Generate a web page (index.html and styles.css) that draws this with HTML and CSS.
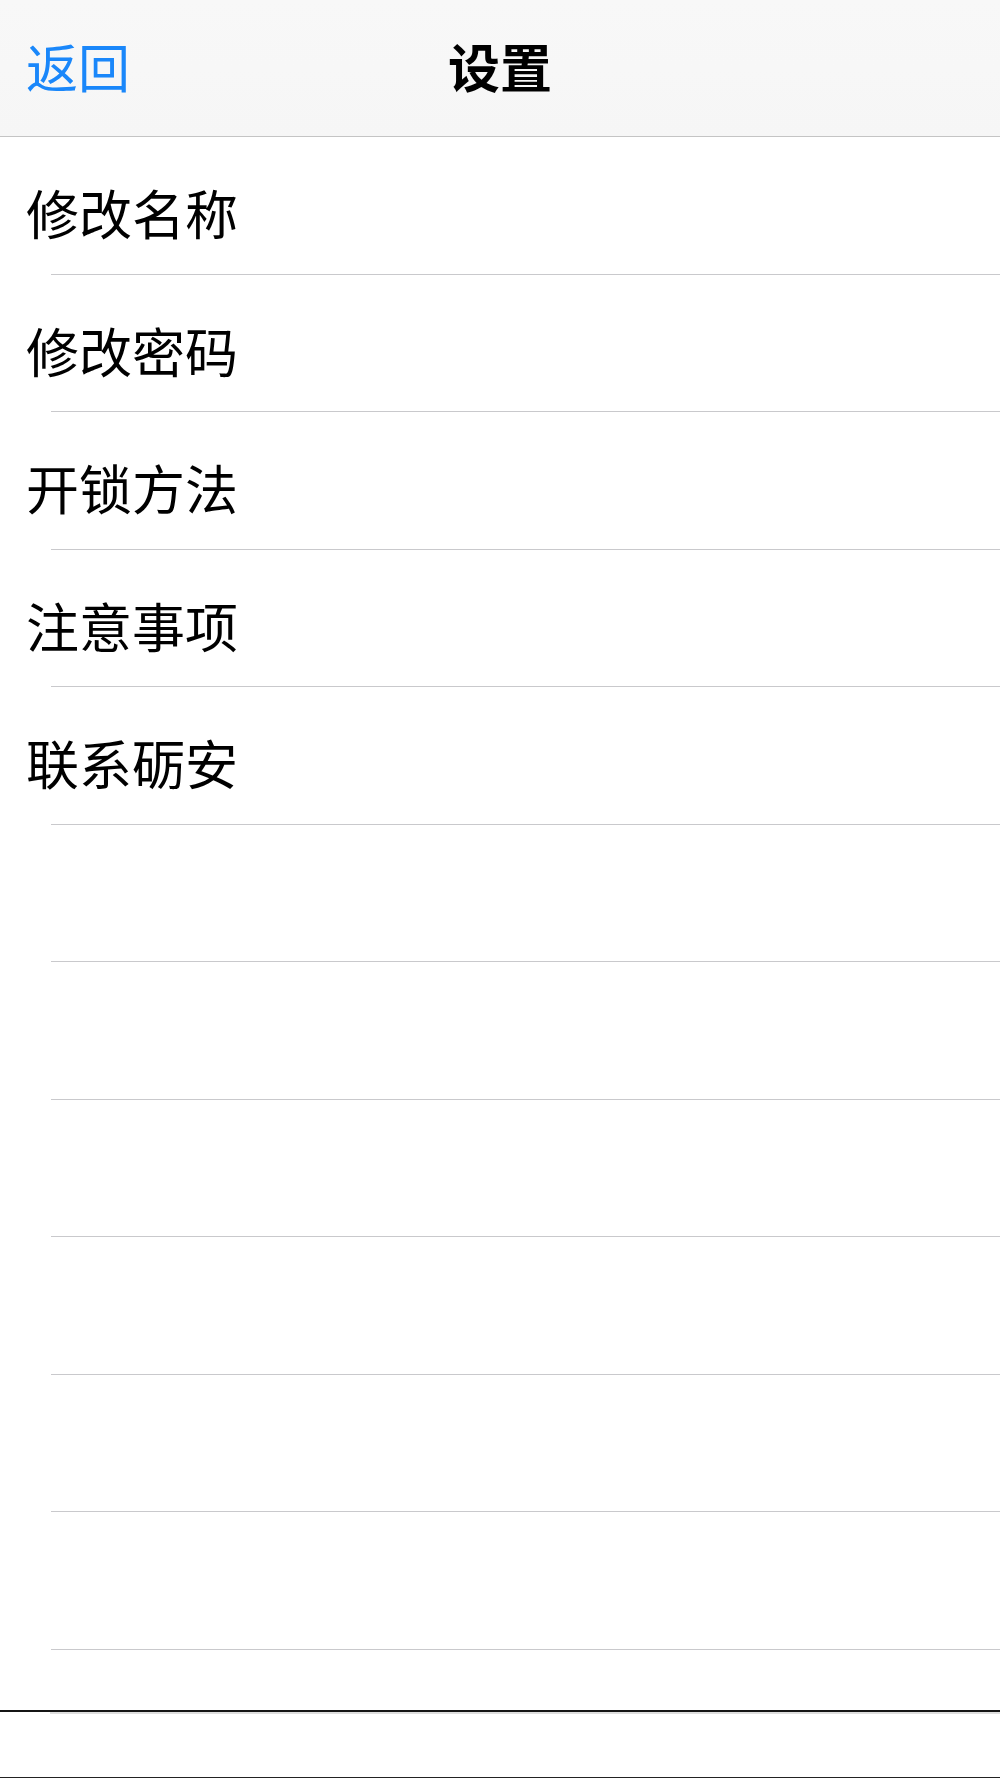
FILE: index.html
```html
<!DOCTYPE html>
<html lang="zh-CN">
<head>
    <meta charset="UTF-8">
    <meta name="viewport" content="width=device-width, initial-scale=1.0">
    <title>设置</title>
    <link rel="stylesheet" href="styles.css">
</head>
<body>
    <div class="page">
        <div class="navbar">
            <a href="#" class="backbtn">返回</a>
            <div class="navtitle">设置</div>
            <div class="navright"></div>
        </div>

        <ul class="settinglist">
            <li class="cell"><span class="celltext">修改名称</span></li>
            <li class="cell"><span class="celltext">修改密码</span></li>
            <li class="cell"><span class="celltext">开锁方法</span></li>
            <li class="cell"><span class="celltext">注意事项</span></li>
            <li class="cell"><span class="celltext">联系砺安</span></li>
            <li class="cell"></li>
            <li class="cell"></li>
            <li class="cell"></li>
            <li class="cell"></li>
            <li class="cell"></li>
            <li class="cell"></li>
        </ul>

        <div class="bottombar">
            <div class="bottomline"></div>
        </div>
    </div>
</body>
</html>
```

FILE: styles.css
```css
body {
    margin: 0;
    background-color: #fff;
    font-family: "Noto Sans CJK SC", "Noto Sans", sans-serif;
}

.page {
    height: 1778px;
    display: flex;
    flex-direction: column;
}

.navbar {
    box-sizing: border-box;
    height: 137px;
    flex-shrink: 0;
    display: flex;
    align-items: center;
    justify-content: space-between;
    padding: 0 26px 6px 26px;
    background: linear-gradient(#f8f8f8, #f6f6f6);
    border-bottom: 1px solid #c4c4c4;
}

.backbtn {
    width: 110px;
    font-size: 52px;
    color: #1a87fa;
    text-decoration: none;
}

.navtitle {
    font-size: 52px;
    font-weight: bold;
    color: #000;
}

.navright {
    width: 110px;
}

.settinglist {
    list-style-type: none;
    margin: 0;
    padding: 0;
}

.cell {
    box-sizing: border-box;
    height: 137.5px;
    margin-left: 51px;
    padding-top: 14px;
    display: flex;
    align-items: center;
    border-bottom: 1px solid #c9c9cc;
}

.celltext {
    margin-left: -25px;
    font-size: 53px;
    color: #000;
}

.bottombar {
    margin-top: auto;
    height: 65px;
    border-top: 2px solid #151515;
    border-bottom: 1px solid #222;
}

.bottomline {
    margin-left: 50px;
    height: 2px;
    background-color: #dedede;
}
```
